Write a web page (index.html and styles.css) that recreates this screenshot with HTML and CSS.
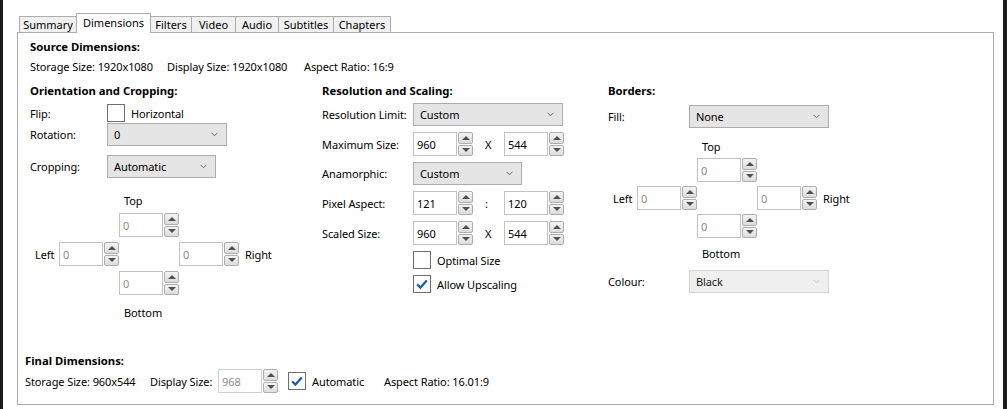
FILE: index.html
```html
<!DOCTYPE html>
<html>
<head>
<meta charset="utf-8">
<title>Dimensions</title>
<link rel="stylesheet" href="styles.css">
</head>
<body>
<div class="window">
  <div class="edge-left"></div>
  <div class="main">
    <div class="tabs">
      <div class="tab">Summary</div>
      <div class="tab tab-active">Dimensions</div>
      <div class="tab">Filters</div>
      <div class="tab">Video</div>
      <div class="tab">Audio</div>
      <div class="tab">Subtitles</div>
      <div class="tab">Chapters</div>
    </div>
    <div class="panel">
      <section class="source">
        <div class="h">Source Dimensions:</div>
        <div class="info-row">
          <span>Storage Size: 1920x1080</span>
          <span>Display Size: 1920x1080</span>
          <span>Aspect Ratio: 16:9</span>
        </div>
      </section>

      <div class="columns">
        <!-- Orientation and Cropping -->
        <div class="col col-orient">
          <div class="h">Orientation and Cropping:</div>
          <div class="frow frow-flip">
            <span class="lbl">Flip:</span>
            <div class="check-line">
              <span class="checkbox"></span><span class="check-text">Horizontal</span>
            </div>
          </div>
          <div class="frow frow-rot">
            <span class="lbl">Rotation:</span>
            <div class="select w-rot"><span>0</span><svg class="chev" width="7" height="5" viewBox="0 0 7 5"><path d="M0.5 0.8 L3.5 3.8 L6.5 0.8" fill="none" stroke="#6a6a6a" stroke-width="1"/></svg></div>
          </div>
          <div class="frow frow-crop">
            <span class="lbl">Cropping:</span>
            <div class="select w-crop"><span>Automatic</span><svg class="chev" width="7" height="5" viewBox="0 0 7 5"><path d="M0.5 0.8 L3.5 3.8 L6.5 0.8" fill="none" stroke="#6a6a6a" stroke-width="1"/></svg></div>
          </div>
          <div class="cross cross-crop">
            <span class="cross-top">Top</span>
            <div class="spin pos-top"><div class="spin-field muted">0</div><div class="spin-btns"><span class="sb"><i class="up"></i></span><span class="sb"><i class="down"></i></span></div></div>
            <span class="cross-left">Left</span>
            <div class="spin pos-left"><div class="spin-field muted">0</div><div class="spin-btns"><span class="sb"><i class="up"></i></span><span class="sb"><i class="down"></i></span></div></div>
            <div class="spin pos-right"><div class="spin-field muted">0</div><div class="spin-btns"><span class="sb"><i class="up"></i></span><span class="sb"><i class="down"></i></span></div></div>
            <span class="cross-right">Right</span>
            <div class="spin pos-bottom"><div class="spin-field muted">0</div><div class="spin-btns"><span class="sb"><i class="up"></i></span><span class="sb"><i class="down"></i></span></div></div>
            <span class="cross-bottom">Bottom</span>
          </div>
        </div>

        <!-- Resolution and Scaling -->
        <div class="col col-res">
          <div class="h">Resolution and Scaling:</div>
          <div class="stack">
            <div class="frow">
              <span class="lbl">Resolution Limit:</span>
              <div class="select w-res"><span>Custom</span><svg class="chev" width="7" height="5" viewBox="0 0 7 5"><path d="M0.5 0.8 L3.5 3.8 L6.5 0.8" fill="none" stroke="#6a6a6a" stroke-width="1"/></svg></div>
            </div>
            <div class="frow">
              <span class="lbl">Maximum Size:</span>
              <div class="pair">
                <div class="spin"><div class="spin-field">960</div><div class="spin-btns"><span class="sb"><i class="up"></i></span><span class="sb"><i class="down"></i></span></div></div>
                <span class="sep">X</span>
                <div class="spin"><div class="spin-field">544</div><div class="spin-btns"><span class="sb"><i class="up"></i></span><span class="sb"><i class="down"></i></span></div></div>
              </div>
            </div>
            <div class="frow">
              <span class="lbl">Anamorphic:</span>
              <div class="select w-ana"><span>Custom</span><svg class="chev" width="7" height="5" viewBox="0 0 7 5"><path d="M0.5 0.8 L3.5 3.8 L6.5 0.8" fill="none" stroke="#6a6a6a" stroke-width="1"/></svg></div>
            </div>
            <div class="frow">
              <span class="lbl">Pixel Aspect:</span>
              <div class="pair">
                <div class="spin"><div class="spin-field">121</div><div class="spin-btns"><span class="sb"><i class="up"></i></span><span class="sb"><i class="down"></i></span></div></div>
                <span class="sep">:</span>
                <div class="spin"><div class="spin-field">120</div><div class="spin-btns"><span class="sb"><i class="up"></i></span><span class="sb"><i class="down"></i></span></div></div>
              </div>
            </div>
            <div class="frow">
              <span class="lbl">Scaled Size:</span>
              <div class="pair">
                <div class="spin"><div class="spin-field">960</div><div class="spin-btns"><span class="sb"><i class="up"></i></span><span class="sb"><i class="down"></i></span></div></div>
                <span class="sep">X</span>
                <div class="spin"><div class="spin-field">544</div><div class="spin-btns"><span class="sb"><i class="up"></i></span><span class="sb"><i class="down"></i></span></div></div>
              </div>
            </div>
            <div class="frow">
              <span class="lbl"></span>
              <div class="check-line"><span class="checkbox"></span><span class="check-text">Optimal Size</span></div>
            </div>
            <div class="frow">
              <span class="lbl"></span>
              <div class="check-line"><span class="checkbox"><svg width="16" height="16" viewBox="0 0 16 16"><path d="M3.2 8.4 L6.4 11.6 L12.8 4.6" fill="none" stroke="#1c5ea6" stroke-width="2.2"/></svg></span><span class="check-text">Allow Upscaling</span></div>
            </div>
          </div>
        </div>

        <!-- Borders -->
        <div class="col col-borders">
          <div class="h">Borders:</div>
          <div class="frow frow-fill">
            <span class="lbl">Fill:</span>
            <div class="select w-fill"><span>None</span><svg class="chev" width="7" height="5" viewBox="0 0 7 5"><path d="M0.5 0.8 L3.5 3.8 L6.5 0.8" fill="none" stroke="#6a6a6a" stroke-width="1"/></svg></div>
          </div>
          <div class="cross cross-borders">
            <span class="cross-top">Top</span>
            <div class="spin pos-top"><div class="spin-field muted">0</div><div class="spin-btns"><span class="sb"><i class="up"></i></span><span class="sb"><i class="down"></i></span></div></div>
            <span class="cross-left">Left</span>
            <div class="spin pos-left"><div class="spin-field muted">0</div><div class="spin-btns"><span class="sb"><i class="up"></i></span><span class="sb"><i class="down"></i></span></div></div>
            <div class="spin pos-right"><div class="spin-field muted">0</div><div class="spin-btns"><span class="sb"><i class="up"></i></span><span class="sb"><i class="down"></i></span></div></div>
            <span class="cross-right">Right</span>
            <div class="spin pos-bottom"><div class="spin-field muted">0</div><div class="spin-btns"><span class="sb"><i class="up"></i></span><span class="sb"><i class="down"></i></span></div></div>
            <span class="cross-bottom">Bottom</span>
          </div>
          <div class="frow frow-colour">
            <span class="lbl">Colour:</span>
            <div class="select select-disabled w-fill"><span>Black</span><svg class="chev" width="7" height="5" viewBox="0 0 7 5"><path d="M0.5 0.8 L3.5 3.8 L6.5 0.8" fill="none" stroke="#c4c4c4" stroke-width="1"/></svg></div>
          </div>
        </div>
      </div>

      <section class="final">
        <div class="h">Final Dimensions:</div>
        <div class="final-row">
          <span class="f-storage">Storage Size: 960x544</span>
          <span class="f-display">Display Size:</span>
          <div class="spin spin-disabled"><div class="spin-field muted">968</div><div class="spin-btns"><span class="sb"><i class="up"></i></span><span class="sb"><i class="down"></i></span></div></div>
          <div class="check-line f-auto"><span class="checkbox"><svg width="16" height="16" viewBox="0 0 16 16"><path d="M3.2 8.4 L6.4 11.6 L12.8 4.6" fill="none" stroke="#1c5ea6" stroke-width="2.2"/></svg></span><span class="check-text">Automatic</span></div>
          <span class="f-aspect">Aspect Ratio: 16.01:9</span>
        </div>
      </section>
    </div>
  </div>
  <div class="edge-right"></div>
</div>
</body>
</html>
```

FILE: styles.css
```css
* { box-sizing: border-box; }

body {
  margin: 0;
  background: #ffffff;
  font-family: "Noto Sans", "Segoe UI", sans-serif;
  font-size: 11px;
  letter-spacing: -0.1px;
  color: #000;
}

.window {
  display: flex;
  width: 1007px;
  height: 409px;
  overflow: hidden;
}

.edge-left { width: 3px; flex: none; background: #1c1c1c; }
.edge-right { width: 4px; flex: none; margin-left: auto; background: #1c1c1c; }

.main {
  flex: none;
  width: 996px;
  padding-left: 14px;
}

/* Tabs */
.tabs {
  display: grid;
  grid-template-columns: 57px 75px 40px 44px 43px 55px 58px;
  align-items: end;
  height: 19px;
  margin-top: 13px;
  padding-left: 2px;
  position: relative;
  z-index: 1;
}

.tab {
  height: 16px;
  border: 1px solid #acacac;
  border-bottom: none;
  border-right: none;
  background: #f0f0f0;
  text-align: center;
  line-height: 15px;
  white-space: nowrap;
  letter-spacing: 0;
}
.tab:last-child { border-right: 1px solid #acacac; }
.tab-active + .tab { border-left: none; }

.tab-active {
  height: 20px;
  margin-bottom: -1px;
  background: #ffffff;
  border-right: 1px solid #acacac;
  line-height: 18px;
}

/* Panel */
.panel {
  width: 977px;
  height: 373px;
  border: 1px solid #acacac;
  background: #fff;
  display: flex;
  flex-direction: column;
  padding-top: 6px;
  padding-bottom: 11px;
}

.h {
  font-weight: bold;
  font-size: 11.3px;
  letter-spacing: 0;
  line-height: 16px;
  white-space: nowrap;
}

.source { padding-left: 12px; }
.info-row {
  display: grid;
  grid-template-columns: 137px 137px auto;
  margin-top: 4px;
  line-height: 16px;
  white-space: nowrap;
}

.columns {
  display: grid;
  grid-template-columns: 292px 286px 1fr;
  margin-top: 8px;
  padding-left: 12px;
}

/* form rows */
.frow {
  display: grid;
  align-items: center;
  white-space: nowrap;
}
.col-orient .frow { grid-template-columns: 77px auto; }
.col-res .frow { grid-template-columns: 91px auto; }
.col-borders .frow { grid-template-columns: 81px auto; }

.frow-flip { margin-top: 5px; }
.frow-rot { margin-top: 1px; }
.frow-crop { margin-top: 9px; }
.frow-fill { margin-top: 6px; }
.frow-colour { margin-top: 6px; }

.stack {
  display: flex;
  flex-direction: column;
  gap: 6px;
  margin-top: 4px;
}

/* Select */
.select {
  height: 23px;
  border: 1px solid #acacac;
  background: #e5e5e5;
  display: flex;
  align-items: center;
  justify-content: space-between;
  padding: 0 8px 0 6px;
}
.select-disabled { background: #efefef; border-color: #d4d4d4; color: #1a1a1a; }
.chev { display: block; }
.w-rot { width: 120px; }
.w-crop { width: 109px; }
.w-res { width: 150px; }
.w-ana { width: 109px; }
.w-fill { width: 140px; }

/* Checkbox */
.check-line { display: flex; align-items: center; height: 18px; }
.checkbox {
  width: 18px;
  height: 18px;
  border: 1px solid #6e6e6e;
  background: #fff;
  display: flex;
  align-items: center;
  justify-content: center;
  flex: none;
}
.check-text { margin-left: 6px; }

/* Spinner */
.spin { display: flex; height: 24px; width: 60px; }
.spin-field {
  width: 44px;
  height: 24px;
  border: 1px solid #c2c2c2;
  background: #fff;
  padding-left: 3px;
  line-height: 22px;
  padding-top: 1px;
}
.muted { color: #8f8a84; }
.spin-btns {
  width: 16px;
  display: flex;
  flex-direction: column;
  gap: 1px;
  padding-left: 1px;
}
.sb {
  flex: 1;
  border: 1px solid #adadad;
  border-radius: 2px;
  background: linear-gradient(#f4f4f4, #dcdcdc);
  display: flex;
  align-items: center;
  justify-content: center;
}
.up, .down {
  width: 0;
  height: 0;
  border-left: 4px solid transparent;
  border-right: 4px solid transparent;
}
.up { border-bottom: 4px solid #505050; }
.down { border-top: 4px solid #505050; }

.pair { display: flex; align-items: center; }
.sep { width: 31px; padding-left: 12px; }

/* Cross layouts (Top/Left/Right/Bottom) */
.cross {
  display: grid;
  grid-template-columns: 24px 60px 60px 60px auto;
  margin-left: 5px;
  align-items: center;
  white-space: nowrap;
}
.cross-crop {
  margin-top: 16px;
  grid-template-rows: 14px 24px 24px 24px 24px;
  row-gap: 5px;
}
.cross-borders {
  margin-top: 11px;
  grid-template-rows: 15px 24px 24px 24px 22px;
  row-gap: 4px;
}
.cross-top { grid-column: 3; grid-row: 1; padding-left: 5px; line-height: 14px; }
.pos-top { grid-column: 3; grid-row: 2; }
.cross-left { grid-column: 1; grid-row: 3; }
.pos-left { grid-column: 2; grid-row: 3; }
.pos-right { grid-column: 4; grid-row: 3; }
.cross-right { grid-column: 5; grid-row: 3; padding-left: 6px; }
.pos-bottom { grid-column: 3; grid-row: 4; }
.cross-bottom { grid-column: 3; grid-row: 5; padding-left: 5px; }

/* Final */
.final {
  margin-top: auto;
  padding-left: 7px;
}
.final-row {
  display: flex;
  align-items: center;
  height: 24px;
  white-space: nowrap;
}
.f-storage { width: 125px; }
.f-display { width: 68px; }
.spin-disabled .spin-field { border-color: #cfcfcf; }
.f-auto { margin-left: 10px; width: 96px; }
```
